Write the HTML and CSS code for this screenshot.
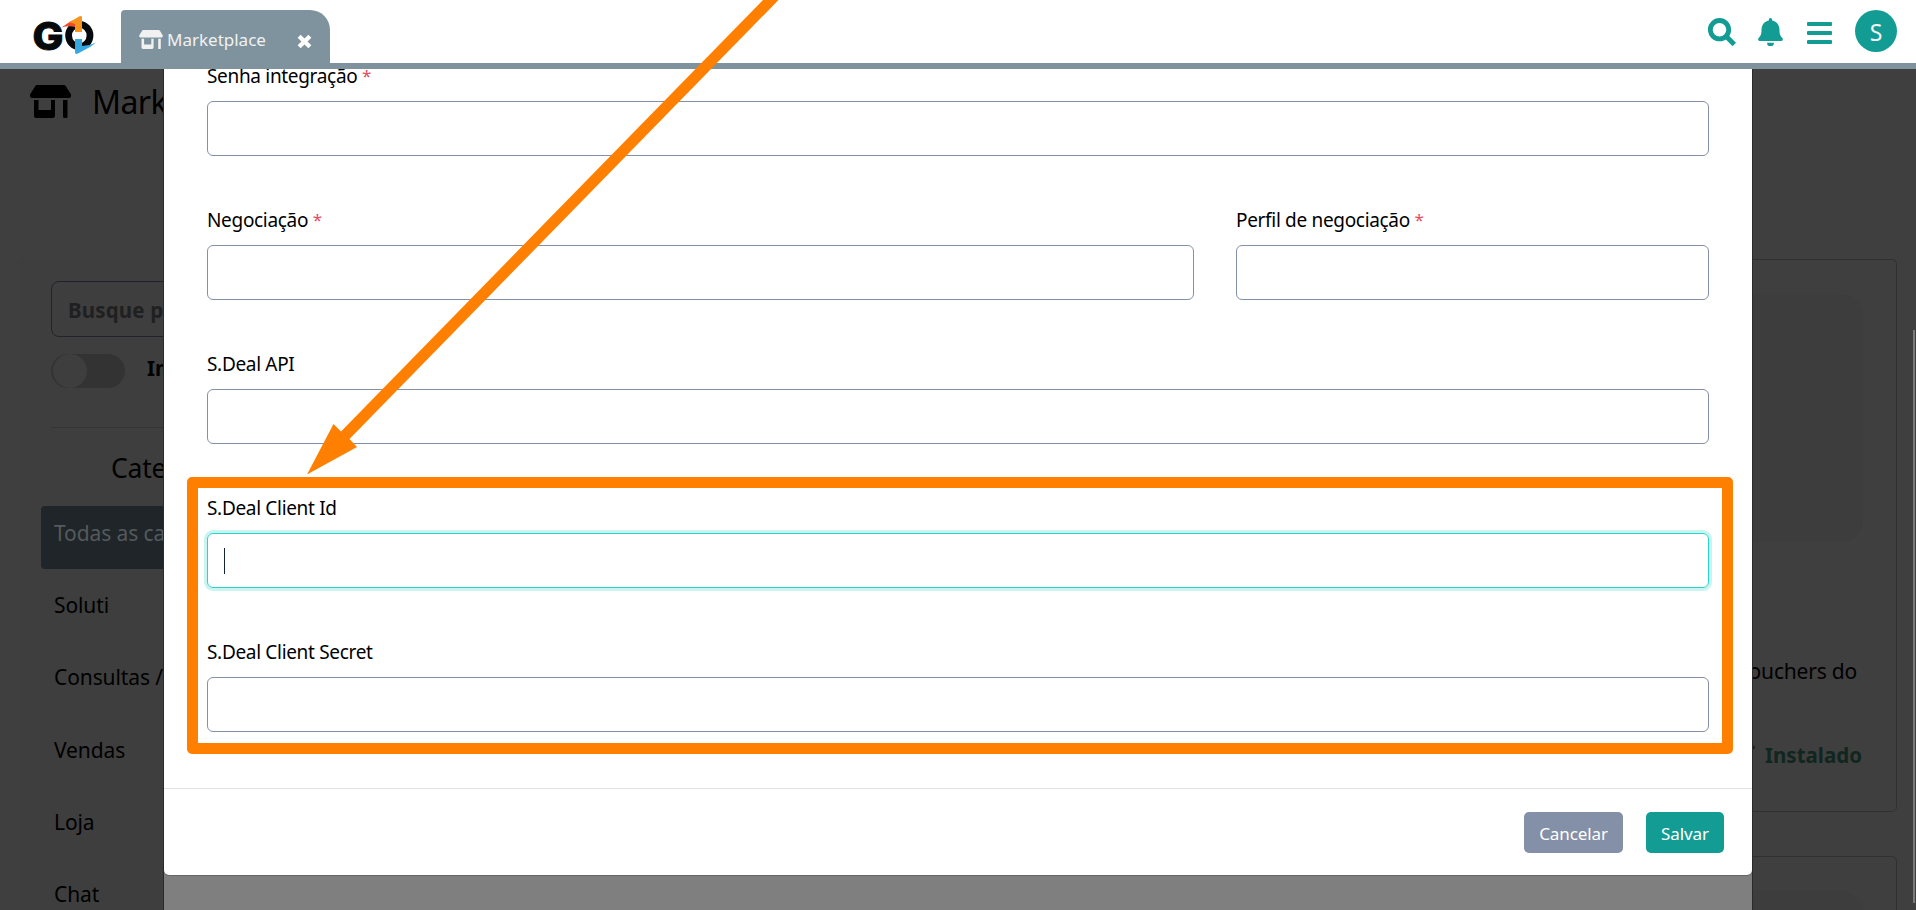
FILE: index.html
```html
<!DOCTYPE html>
<html lang="pt-BR">
<head>
<meta charset="utf-8">
<title>Marketplace</title>
<link rel="stylesheet" href="styles.css">
</head>
<body>
<svg class="defs" aria-hidden="true">
  <symbol id="store" viewBox="0 0 41 33">
    <path d="M7 0H34a2 2 0 0 1 1.700 1L41 9.500V11q0 2-2 2H2q-2 0-2-2V9.500L5.300 1A2 2 0 0 1 7 0Z"/>
    <path d="M4 15H8.500V25H21V15H25V30.500Q25 33 22.500 33H6.500Q4 33 4 30.500ZM33 15H37.500V31.500Q37.500 33 36 33H34.500Q33 33 33 31.500Z"/>
  </symbol>
</svg>

<header class="topbar">
  <svg class="logo" viewBox="0 0 66 42">
    <text class="logo-letter" x="-0.500" y="35.500" textLength="31" lengthAdjust="spacingAndGlyphs">G</text>
    <ellipse cx="46.300" cy="21.500" rx="10.700" ry="11.200" fill="none" stroke="#070a0c" stroke-width="6.800"/>
    <path d="M42.300 7H49V36H42.300Z" fill="#fff"/>
    <path d="M28.500 13.500L38 7 42 6V13Q35 11.500 28.500 13.500Z" fill="#ee4b2b"/>
    <path d="M36 8.500L46.500 2.200Q49 1.500 49 3.500V18H42V10Q39 8.500 36 8.500Z" fill="#f7941e"/>
    <path d="M42 25H49V32Q56 32 63 28.500L57 33 45 39.500Q42 40.800 42 38Z" fill="#36a9e1"/>
  </svg>
  <div class="tab">
    <svg class="tab-icon"><use href="#store"/></svg>
    <span class="tab-name">Marketplace</span>
    <svg class="tab-close" viewBox="0 0 14 14"><path d="M2 2 12 12M12 2 2 12"/></svg>
  </div>
  <div class="actions">
    <svg class="i-search" viewBox="0 0 28 28"><circle cx="11.500" cy="11.700" r="9.200"/><path d="M17.800 18 26.300 26.500"/></svg>
    <svg class="i-bell" viewBox="0 0 25 28"><path d="M12.500 0C13.700 0 14.200.9 14.200 2.400 19 3.400 21.500 7 21.500 12 21.500 16.500 22.500 18 24.400 20 25.300 21.300 24.600 23 23 23H2C.4 23-.3 21.300.6 20 2.500 18 3.500 16.500 3.500 12 3.500 7 6 3.400 10.800 2.400 10.800.9 11.300 0 12.500 0ZM9 24.800H16A3.500 3.500 0 0 1 9 24.800Z"/></svg>
    <span class="i-menu"><i></i><i></i><i></i></span>
    <span class="avatar">S</span>
  </div>
</header>

<main class="page">
  <h1 class="title"><svg class="title-icon"><use href="#store"/></svg>Marketplace</h1>
  <div class="columns">
    <aside class="sidebar">
      <div class="search">Busque por nome</div>
      <div class="switch-row"><span class="switch"><i></i></span><b>Instalados</b></div>
      <h2 class="cat-title">Categorias</h2>
      <nav class="cats">
        <a class="active">Todas as categorias</a>
        <a>Soluti</a>
        <a>Consultas / Dados</a>
        <a>Vendas</a>
        <a>Loja</a>
        <a>Chat</a>
      </nav>
    </aside>
    <section class="cards">
      <article class="card">
        <div class="cover"></div>
        <p class="desc">vouchers do</p>
        <p class="status"><svg viewBox="0 0 20 16"><path d="M2 8 7 13 18 2"/></svg>Instalado</p>
      </article>
      <article class="card"><div class="cover"></div></article>
    </section>
  </div>
  <span class="scroll-thumb"></span>
</main>

<div class="dialog-layer">
  <form class="dialog">
    <div class="fields">
      <div class="field"><label>Senha integração <em>*</em></label><span class="input"></span></div>
      <div class="row">
        <div class="field"><label>Negociação <em>*</em></label><span class="input"></span></div>
        <div class="field"><label>Perfil de negociação <em>*</em></label><span class="input"></span></div>
      </div>
      <div class="field"><label>S.Deal API</label><span class="input"></span></div>
      <div class="field"><label>S.Deal Client Id</label><span class="input focused"><i class="caret"></i></span></div>
      <div class="field"><label>S.Deal Client Secret</label><span class="input"></span></div>
    </div>
    <footer class="buttons">
      <span class="btn cancel">Cancelar</span>
      <span class="btn save">Salvar</span>
    </footer>
  </form>
</div>

<div class="highlight"></div>
<svg class="arrow" viewBox="0 0 800 480"><path d="M763 0H778.500L349.500 439 357 447 307 474.500 333.500 424 341 431.500Z"/></svg>
</body>
</html>
```
FILE: styles.css
```css
* { box-sizing: border-box; }

body {
  margin: 0;
  width: 1916px;
  height: 910px;
  overflow: hidden;
  position: relative;
  background: #3f3f3f;
  color: #000;
  font-family: "Noto Sans", sans-serif;
}

.defs { position: absolute; width: 0; height: 0; }

/* Top bar */
.topbar {
  display: flex;
  height: 69px;
  background: #fff;
  border-bottom: 6px solid #7e939e;
}
.logo { width: 66px; height: 42px; margin: 14px 0 0 33px; overflow: visible; }
.logo-letter { font: 800 38.500px Inter, sans-serif; fill: #070a0c; stroke: #070a0c; stroke-width: 0.900; }
.tab {
  display: flex;
  align-items: center;
  width: 209px;
  height: 53px;
  margin: 10px 0 0 22px;
  padding: 0 18px;
  border-radius: 4px 20px 0 0;
  background: #7e939e;
  color: #f1f1f1;
}
.tab-icon { width: 24px; height: 19px; fill: #f1f1f1; margin-top: 5px; }
.tab-name { margin-left: 4px; margin-top: 6px; font-size: 17px; letter-spacing: 0; }
.tab-close { width: 15px; height: 15px; margin: 9px 0 0 auto; stroke: #fff; stroke-width: 4; }
.actions { display: flex; align-items: flex-start; margin-left: auto; margin-right: 19px; color: #139c94; }
.i-search { width: 28px; height: 28px; margin-top: 18px; fill: none; stroke: #139c94; stroke-width: 4.800; }
.i-bell { width: 25px; height: 28px; margin: 18px 0 0 22px; fill: #139c94; }
.i-menu { display: flex; flex-direction: column; gap: 5px; width: 25px; margin: 22px 0 0 24px; }
.i-menu i { height: 4px; border-radius: 1px; background: #139c94; }
.avatar {
  width: 42px;
  height: 42px;
  margin: 10px 0 0 23px;
  border-radius: 50%;
  background: #139c94;
  color: #f4f4f4;
  font-size: 23px;
  line-height: 44px;
  text-align: center;
}

/* Dimmed page */
.page { height: 841px; overflow: hidden; }
.title {
  display: flex;
  height: 190px;
  margin: 0;
  padding: 9px 0 0 30px;
  font-size: 32px;
  line-height: 48px;
  font-weight: 400;
  letter-spacing: -0.600px;
}
.title-icon { width: 41px; height: 33px; margin: 7px 21px 0 0; }
.columns { display: flex; justify-content: space-between; padding: 0 19px; }
.sidebar { width: 400px; height: 651px; padding: 22px 22px 0; background: #3e3e3e; }
.search {
  height: 56px;
  margin-left: 10px;
  padding-left: 16px;
  border: 1px solid #212328;
  border-radius: 8px;
  color: #1e2021;
  font-size: 20.500px;
  line-height: 56px;
  font-weight: 700;
  letter-spacing: 0.150px;
}
.switch-row { display: flex; height: 91px; margin-left: 10px; padding-top: 17px; border-bottom: 1px solid #343536; }
.switch { width: 74px; height: 34px; padding-left: 2px; border-radius: 17px; background: #333; }
.switch i { display: block; width: 34px; height: 34px; border-radius: 50%; background: #3e3e3e; }
.switch-row b { margin-left: 22px; font-size: 20.500px; line-height: 28px; }
.cat-title { height: 78px; margin: 0; padding: 22px 0 0 70px; font-size: 26.500px; line-height: 36px; font-weight: 400; letter-spacing: -0.200px; }
.cats a { display: block; height: 63px; margin-bottom: 9.200px; padding-left: 13px; border-radius: 4px; font-size: 21px; line-height: 54px; letter-spacing: -0.100px; }
.cats .active { background: #1f2528; color: #555a5d; }
.cards { width: 340px; }
.card { height: 553px; margin-bottom: 44px; padding: 34px 33px 0; border: 1px solid #303030; border-radius: 5px; }
.cards .card + .card { height: 300px; }
.cover { height: 248px; border-radius: 22px; background: #3d3d3d; }
.desc { margin: 114px 6px 0; font-size: 21px; line-height: 30px; text-align: right; letter-spacing: -0.200px; }
.status { display: flex; justify-content: flex-end; align-items: center; gap: 9px; margin: 54px 1px 0 0; color: #10261f; font-size: 20.500px; line-height: 30px; font-weight: 700; }
.status svg { width: 20px; height: 16px; margin-top: -6px; fill: none; stroke: #10261f; stroke-width: 4; }
.scroll-thumb { position: absolute; left: 1913px; top: 330px; width: 2px; height: 573px; background: #7b7b7b; }

/* Dialog */
.dialog-layer {
  position: absolute;
  top: 69px;
  left: 163px;
  width: 1590px;
  height: 841px;
  border: solid #2a2a2a;
  border-width: 0 1px;
  background: #7f7f7f;
}
.dialog { height: 806px; border-radius: 0 0 5px 5px; background: #fff; box-shadow: 0 1px 0 #666; overflow: hidden; }
.fields { height: 719px; padding: 0 43px; margin-top: -12px; }
.field { height: 144px; flex: 1; }
.field label { display: block; height: 44px; font-size: 19px; line-height: 39px; letter-spacing: -0.320px; }
.field em { position: relative; top: -1px; color: #e84a5f; font-size: 17px; line-height: 1; font-style: normal; }
.row { display: grid; grid-template-columns: 987px 473px; column-gap: 42px; }
.input { display: block; height: 55px; border: 1px solid #8490a8; border-radius: 6px; }
.input.focused { padding: 14px 16px; border-color: #2bd4c8; box-shadow: 0 0 0 3px #c8f5f1; }
.caret { display: block; width: 1px; height: 26px; background: #132238; }
.buttons {
  display: flex;
  justify-content: flex-end;
  gap: 23px;
  height: 87px;
  padding: 23px 28px 0;
  margin-top: 12px;
  border-top: 1px solid #dee2e6;
}
.btn { height: 41px; border-radius: 5px; color: #fff; font-size: 17px; line-height: 43px; text-align: center; letter-spacing: -0.100px; }
.cancel { width: 99px; background: #848fa8; }
.save { width: 78px; background: #139c94; }

/* Annotation */
.highlight { position: absolute; left: 187px; top: 477px; width: 1546px; height: 277px; border: 11px solid #ff8000; border-radius: 5px; }
.arrow { position: absolute; left: 0; top: 0; width: 800px; height: 480px; fill: #ff8000; }
```
